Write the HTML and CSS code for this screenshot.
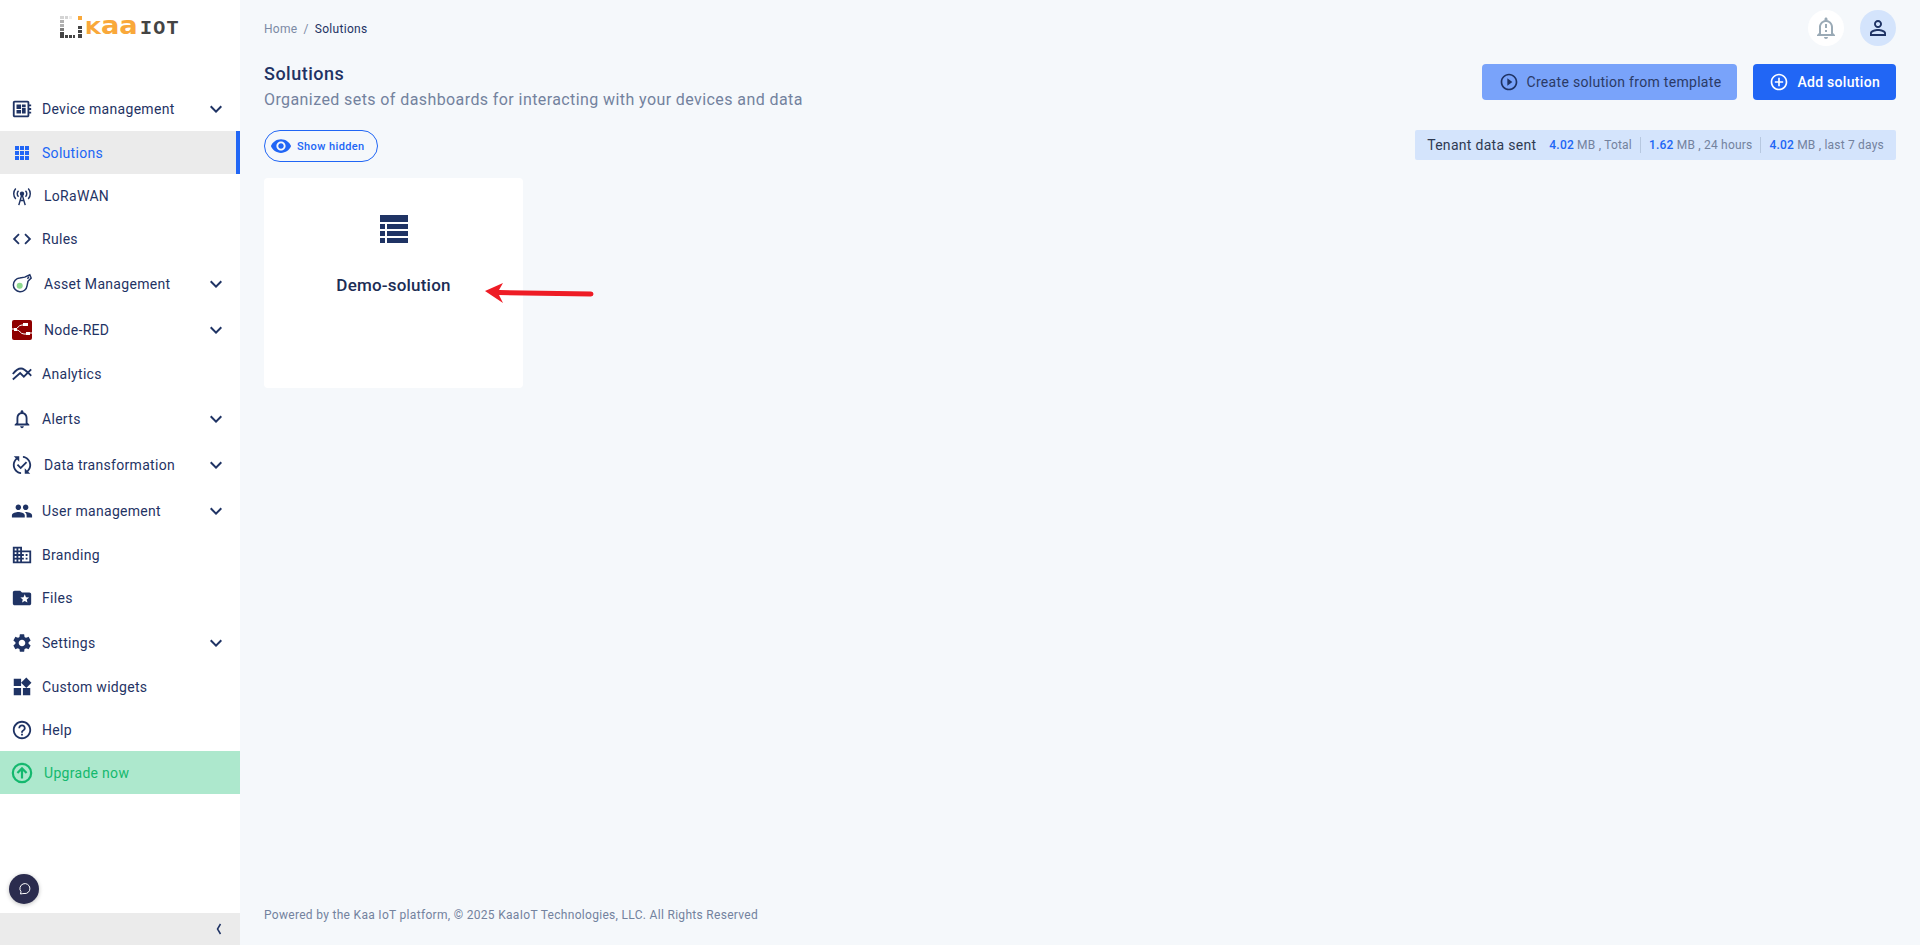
FILE: index.html
```html
<!DOCTYPE html>
<html lang="en">
<head>
    <meta charset="UTF-8">
    <meta name="viewport" content="width=device-width, initial-scale=1.0">
    <title>Solutions</title>
    <link rel="stylesheet" href="styles.css">
</head>
<body>
    <svg class="sprite" width="0" height="0">
        <symbol id="chevron" viewBox="0 0 24 24"><path d="M16.59 8.59L12 13.17 7.41 8.59 6 10l6 6 6-6z"/></symbol>
    </svg>

    <aside class="sidebar">
        <div class="logo">
            <svg class="logo-dots" width="22" height="22" viewBox="0 0 22 22">
                <path fill="#d4d4d4" d="M0 0h4v3H0zM5 0h3v3H5z"/>
                <path fill="#ededed" d="M9 0h3v3H9z"/>
                <path fill="#b0b0b0" d="M0 4h4v3H0zM0 8h4v3H0z"/>
                <path fill="#7a7a7a" d="M0 12h4v3H0z"/>
                <path fill="#444" d="M0 16h4v6H0zM5 19h3v3H5zM9 19h3v3H9zM13 19h2v3h-2zM18 10h4v3h-4zM18 14h4v3h-4zM18 18h4v4h-4z"/>
                <path fill="#f9a83a" d="M18 0h4v4h-4z"/>
            </svg>
            <span class="logo-kaa"><span class="logo-k">K</span>aa</span>
            <span class="logo-iot">IOT</span>
        </div>

        <nav class="nav">
            <a class="nav-item nav-group nav-first">
                <svg class="nav-icon" viewBox="0 0 24 24"><path d="M22 9V7h-2V5c0-1.1-.9-2-2-2H4c-1.1 0-2 .9-2 2v14c0 1.1.9 2 2 2h14c1.1 0 2-.9 2-2v-2h2v-2h-2v-2h2v-2h-2V9h2zm-4 10H4V5h14v14zM6 13h5v4H6zm6-6h4v3h-4zM6 7h5v5H6zm6 4h4v6h-4z"/></svg>
                <span>Device management</span>
                <svg class="nav-chevron"><use href="#chevron"/></svg>
            </a>
            <a class="nav-item nav-active">
                <svg class="nav-icon nav-icon-full" viewBox="0 0 24 24"><path d="M5 5h4v4H5zM10 5h4v4h-4zM15 5h4v4h-4zM5 10h4v4H5zM10 10h4v4h-4zM15 10h4v4h-4zM5 15h4v4H5zM10 15h4v4h-4zM15 15h4v4h-4z"/></svg>
                <span>Solutions</span>
            </a>
            <a class="nav-item nav-wide nav-tall">
                <svg class="nav-icon nav-line nav-line-thin" viewBox="0 0 24 24"><circle cx="12" cy="9.500" r="1.600" fill="currentColor"/><path d="M12 10l-3.500 12M12 10l3.500 12M9.800 17h4.400M8.200 6.200a4.600 4.600 0 0 0 0 6.600M15.800 6.200a4.600 4.600 0 0 1 0 6.600M5.200 3.800a8.400 8.400 0 0 0 0 11.400M18.800 3.800a8.400 8.400 0 0 1 0 11.400"/></svg>
                <span>LoRaWAN</span>
            </a>
            <a class="nav-item nav-up">
                <svg class="nav-icon" viewBox="0 0 24 24"><path d="M9.400 16.600L4.800 12l4.600-4.600L8 6l-6 6 6 6 1.400-1.400zm5.200 0l4.600-4.600-4.600-4.600L16 6l6 6-6 6-1.400-1.400z"/></svg>
                <span>Rules</span>
            </a>
            <a class="nav-item nav-wide nav-group">
                <svg class="nav-icon nav-line nav-line-thin" viewBox="0 0 24 24"><path d="M15 4.500l5.500-2.500 1.500 3.500-3.500 3.500-1 5a7.500 7.500 0 1 1-8-8.500zM19.500 4l-1.500 2.500"/><circle cx="9.500" cy="14" r="2.500" fill="#8fd98f" stroke="#8fd98f"/></svg>
                <span>Asset Management</span>
                <svg class="nav-chevron"><use href="#chevron"/></svg>
            </a>
            <a class="nav-item nav-wide nav-group">
                <svg class="nav-icon nav-icon-red" viewBox="0 0 20 20"><rect width="20" height="20" rx="2" fill="#8f0000"/><path fill="none" stroke="#fff" d="M0 9h3c3 0 3-4 7-4h3M5 10c3 0 3 4 7 4h3M16 13h4M3 9l2 1"/><path fill="#fff" d="M11 3h5v3h-5zM14 12h4v3h-4zM2 8h3v3H2z"/></svg>
                <span>Node-RED</span>
                <svg class="nav-chevron"><use href="#chevron"/></svg>
            </a>
            <a class="nav-item nav-up">
                <svg class="nav-icon nav-line" viewBox="0 0 24 24"><path d="M2 12c3-4 6-6 9-6 4 0 7 4 11 8M2 18l8-7 4 4 8-8"/></svg>
                <span>Analytics</span>
            </a>
            <a class="nav-item nav-group">
                <svg class="nav-icon" viewBox="0 0 24 24"><path d="M12 22c1.100 0 2-.9 2-2h-4c0 1.100.9 2 2 2zm6-6v-5c0-3.070-1.630-5.640-4.500-6.320V4c0-.83-.67-1.500-1.500-1.500s-1.500.67-1.500 1.500v.68C7.640 5.360 6 7.920 6 11v5l-2 2v1h16v-1l-2-2zm-2 1H8v-6c0-2.480 1.510-4.500 4-4.500s4 2.020 4 4.500v6z"/></svg>
                <span>Alerts</span>
                <svg class="nav-chevron"><use href="#chevron"/></svg>
            </a>
            <a class="nav-item nav-wide nav-group">
                <svg class="nav-icon" viewBox="0 0 24 24"><path d="M17.660 9.530l-7.070 7.070-4.240-4.240 1.410-1.410 2.830 2.830 5.660-5.660 1.410 1.410zM4 12c0-2.330 1.020-4.420 2.620-5.880L9 8.500v-6H3l2.200 2.200C3.240 6.520 2 9.110 2 12c0 5.190 3.950 9.450 9 9.950v-2.020c-3.940-.49-7-3.860-7-7.930zm18 0c0-5.190-3.950-9.450-9-9.950v2.020c3.940.49 7 3.860 7 7.930 0 2.330-1.020 4.420-2.620 5.880L15 15.500v6h6l-2.200-2.200c1.960-1.820 3.200-4.410 3.200-7.300z"/></svg>
                <span>Data transformation</span>
                <svg class="nav-chevron"><use href="#chevron"/></svg>
            </a>
            <a class="nav-item nav-group">
                <svg class="nav-icon" viewBox="0 0 24 24"><path d="M16 11c1.660 0 2.990-1.340 2.990-3S17.660 5 16 5c-1.660 0-3 1.340-3 3s1.340 3 3 3zm-8 0c1.660 0 2.990-1.340 2.990-3S9.660 5 8 5C6.340 5 5 6.340 5 8s1.340 3 3 3zm0 2c-2.330 0-7 1.170-7 3.500V19h14v-2.500c0-2.330-4.670-3.500-7-3.500zm8 0c-.29 0-.62.02-.97.05 1.160.84 1.970 1.970 1.970 3.450V19h6v-2.500c0-2.330-4.670-3.500-7-3.500z"/></svg>
                <span>User management</span>
                <svg class="nav-chevron"><use href="#chevron"/></svg>
            </a>
            <a class="nav-item nav-up">
                <svg class="nav-icon" viewBox="0 0 24 24"><path d="M12 7V3H2v18h20V7H12zM6 19H4v-2h2v2zm0-4H4v-2h2v2zm0-4H4V9h2v2zm0-4H4V5h2v2zm4 12H8v-2h2v2zm0-4H8v-2h2v2zm0-4H8V9h2v2zm0-4H8V5h2v2zm10 12h-8v-2h2v-2h-2v-2h2v-2h-2V9h8v10zm-2-8h-2v2h2v-2zm0 4h-2v2h2v-2z"/></svg>
                <span>Branding</span>
            </a>
            <a class="nav-item nav-up">
                <svg class="nav-icon" viewBox="0 0 24 24"><path d="M20 6h-8l-2-2H4c-1.100 0-1.990.9-1.990 2L2 18c0 1.100.9 2 2 2h16c1.100 0 2-.9 2-2V8c0-1.100-.9-2-2-2zm-2.060 11L15 15.280 12.060 17l.78-3.330-2.590-2.240 3.410-.29L15 8l1.340 3.140 3.410.29-2.590 2.240.78 3.330z"/></svg>
                <span>Files</span>
            </a>
            <a class="nav-item nav-group">
                <svg class="nav-icon" viewBox="0 0 24 24"><path d="M19.140 12.940c.04-.3.06-.61.06-.94 0-.32-.02-.64-.07-.94l2.030-1.580c.18-.14.23-.41.12-.61l-1.920-3.320c-.12-.22-.37-.29-.59-.22l-2.390.96c-.5-.38-1.030-.7-1.620-.94l-.36-2.540c-.04-.24-.24-.41-.48-.41h-3.840c-.24 0-.43.17-.47.41l-.36 2.540c-.59.24-1.130.57-1.620.94l-2.390-.96c-.22-.08-.47 0-.59.22L2.740 8.870c-.12.21-.08.47.12.61l2.030 1.580c-.05.3-.09.63-.09.94s.02.64.07.94l-2.030 1.580c-.18.14-.23.41-.12.61l1.920 3.320c.12.22.37.29.59.22l2.390-.96c.5.38 1.030.7 1.620.94l.36 2.540c.05.24.24.41.48.41h3.840c.24 0 .44-.17.47-.41l.36-2.540c.59-.24 1.130-.56 1.620-.94l2.390.96c.22.08.47 0 .59-.22l1.920-3.320c.12-.22.07-.47-.12-.61l-2.010-1.580zM12 15.600c-1.980 0-3.600-1.620-3.600-3.600s1.620-3.600 3.600-3.600 3.600 1.620 3.600 3.600-1.620 3.600-3.600 3.600z"/></svg>
                <span>Settings</span>
                <svg class="nav-chevron"><use href="#chevron"/></svg>
            </a>
            <a class="nav-item nav-up">
                <svg class="nav-icon" viewBox="0 0 24 24"><path d="M13 13v8h8v-8h-8zM3 21h8v-8H3v8zM3 3v8h8V3H3zm13.660-1.310L11 7.340 16.660 13l5.660-5.660-5.660-5.650z"/></svg>
                <span>Custom widgets</span>
            </a>
            <a class="nav-item nav-short">
                <svg class="nav-icon" viewBox="0 0 24 24"><path d="M11 18h2v-2h-2v2zm1-16C6.480 2 2 6.480 2 12s4.480 10 10 10 10-4.480 10-10S17.520 2 12 2zm0 18c-4.410 0-8-3.590-8-8s3.590-8 8-8 8 3.590 8 8-3.590 8-8 8zm0-14c-2.210 0-4 1.790-4 4h2c0-1.100.9-2 2-2s2 .9 2 2c0 2-3 1.750-3 5h2c0-2.250 3-2.500 3-5 0-2.210-1.790-4-4-4z"/></svg>
                <span>Help</span>
            </a>
            <a class="nav-item nav-wide nav-upgrade">
                <svg class="nav-icon nav-line" viewBox="0 0 24 24"><circle cx="12" cy="12" r="10"/><path d="M12 18V7M7 12l5-5 5 5"/></svg>
                <span>Upgrade now</span>
            </a>
        </nav>

        <button class="chat-btn">
            <svg width="16" height="16" viewBox="0 0 16 16" fill="none" stroke="#fff"><path d="M4.500 13l.5-2.300A5 5 0 1 1 8 12.500c-1.300 0-2.300.3-3.500.5z"/></svg>
        </button>
        <div class="collapse-bar">
            <svg width="8" height="12" viewBox="0 0 8 12" fill="none" stroke="#1f3364" stroke-width="1.500"><path d="M5.500 1L2.500 6l3 5"/></svg>
        </div>
    </aside>

    <main class="main">
        <div class="topbar">
            <div class="breadcrumb">
                <span class="crumb-muted">Home</span>
                <span class="crumb-muted">/</span>
                <span>Solutions</span>
            </div>
            <div class="topbar-actions">
                <div class="round-btn">
                    <svg width="24" height="24" viewBox="0 0 24 24" fill="#9aaab6"><path d="M10.010 21.010c0 1.100.89 1.990 1.990 1.990s1.990-.89 1.990-1.990h-3.980zM12 6c2.760 0 5 2.240 5 5v7H7v-7c0-2.760 2.240-5 5-5zm0-4.500c-.83 0-1.500.67-1.500 1.500v1.170C7.360 4.850 5 7.650 5 11v6l-2 2v1h18v-1l-2-2v-6c0-3.350-2.360-6.150-5.500-6.830V3c0-.83-.67-1.500-1.500-1.500zM11 8h2v4h-2zm0 6h2v2h-2z"/></svg>
                </div>
                <div class="round-btn round-btn-user">
                    <svg width="24" height="24" viewBox="0 0 24 24" fill="#1f3364"><path d="M12 5.900c1.160 0 2.100.94 2.100 2.100s-.94 2.100-2.100 2.100S9.900 9.160 9.900 8s.94-2.100 2.100-2.100m0 9c2.970 0 6.100 1.460 6.100 2.100v1.100H5.900V17c0-.64 3.130-2.100 6.100-2.100M12 4C9.790 4 8 5.790 8 8s1.790 4 4 4 4-1.790 4-4-1.790-4-4-4zm0 9c-2.670 0-8 1.340-8 4v3h16v-3c0-2.660-5.330-4-8-4z"/></svg>
                </div>
            </div>
        </div>

        <div class="page-head">
            <div>
                <h1 class="page-title">Solutions</h1>
                <p class="page-sub">Organized sets of dashboards for interacting with your devices and data</p>
            </div>
            <div class="page-actions">
                <button class="btn btn-light">
                    <svg width="20" height="20" viewBox="0 0 24 24" fill="#1f3364"><path d="M10 16.500l6-4.500-6-4.500v9zM12 2C6.480 2 2 6.480 2 12s4.480 10 10 10 10-4.480 10-10S17.520 2 12 2zm0 18c-4.410 0-8-3.590-8-8s3.590-8 8-8 8 3.590 8 8-3.590 8-8 8z"/></svg>
                    Create solution from template
                </button>
                <button class="btn btn-primary">
                    <svg width="20" height="20" viewBox="0 0 24 24" fill="#fff"><path d="M13 7h-2v4H7v2h4v4h2v-4h4v-2h-4V7zm-1-5C6.480 2 2 6.480 2 12s4.480 10 10 10 10-4.480 10-10S17.520 2 12 2zm0 18c-4.410 0-8-3.590-8-8s3.590-8 8-8 8 3.590 8 8-3.590 8-8 8z"/></svg>
                    Add solution
                </button>
            </div>
        </div>

        <div class="filter-row">
            <button class="pill">
                <svg width="22" height="22" viewBox="0 0 24 24" fill="#2166f5"><path d="M12 4.500C7 4.500 2.730 7.610 1 12c1.730 4.390 6 7.500 11 7.500s9.270-3.110 11-7.500c-1.730-4.390-6-7.500-11-7.500zM12 17c-2.760 0-5-2.240-5-5s2.240-5 5-5 5 2.240 5 5-2.240 5-5 5zm0-8c-1.660 0-3 1.340-3 3s1.340 3 3 3 3-1.340 3-3-1.340-3-3-3z"/></svg>
                Show hidden
            </button>
            <div class="usage">
                <span class="usage-title">Tenant data sent</span>
                <span class="usage-cell"><b>4.02</b> MB , Total</span>
                <span class="usage-cell"><b>1.62</b> MB , 24 hours</span>
                <span class="usage-cell"><b>4.02</b> MB , last 7 days</span>
            </div>
        </div>

        <div class="cards">
            <div class="card">
                <svg width="28" height="28" viewBox="0 0 28 28" fill="#1f3364"><path d="M0 0h28v7H0zM0 9h5v5H0zM7 9h21v5H7zM0 16h5v5H0zM7 16h21v5H7zM0 23h5v5H0zM7 23h21v5H7z"/></svg>
                <div class="card-name">Demo-solution</div>
            </div>
        </div>

        <footer class="footer">Powered by the Kaa IoT platform, © 2025 KaaIoT Technologies, LLC. All Rights Reserved</footer>
    </main>

    <!-- annotation on top of the screenshot -->
    <svg class="arrow" width="110" height="20" viewBox="0 0 110 20">
        <path fill="#ee1c25" d="M0 6l18-8-4 7 92 1.500a2.500 2.500 0 0 1 0 5L14 10l4 8z" transform="translate(0 2)"/>
    </svg>
</body>
</html>
```

FILE: styles.css
```css
* {
    box-sizing: border-box;
}

body {
    display: flex;
    height: 100vh;
    margin: 0;
    overflow: hidden;
    background-color: #f5f8fb;
    color: #1f3364;
    font-family: Roboto, "Liberation Sans", sans-serif;
}

.sprite {
    position: absolute;
}

/* sidebar */
.sidebar {
    display: flex;
    flex-direction: column;
    flex: none;
    width: 240px;
    background-color: #fff;
}

.logo {
    display: flex;
    align-items: flex-end;
    height: 86px;
    padding: 16px 0 0 60px;
}

.logo-dots {
    margin-right: 3px;
    margin-bottom: 48px;
}

.logo-kaa {
    display: inline-block;
    width: 55px;
    margin-bottom: 44px;
    color: #f9a83a;
    font-family: "DejaVu Sans", sans-serif;
    font-size: 24px;
    font-weight: 700;
    line-height: 28px;
    white-space: nowrap;
    transform: scaleX(1.14);
    transform-origin: left;
}

.logo-k {
    font-size: 18px;
}

.logo-iot {
    margin-bottom: 44px;
    color: #444;
    font-family: "Liberation Mono", monospace;
    font-size: 20px;
    font-weight: 700;
    line-height: 27px;
    letter-spacing: 1.300px;
}

.nav {
    display: flex;
    flex-direction: column;
}

.nav-item {
    display: flex;
    align-items: center;
    gap: 8px;
    height: 43px;
    padding: 0 10px;
    font-size: 14px;
    letter-spacing: 0.3px;
}

.nav-group {
    height: 46px;
}

.nav-first {
    height: 45px;
}

.nav-tall {
    height: 44px;
}

.nav-short {
    height: 42px;
}

.nav-up {
    padding-bottom: 2px;
}

.nav-wide {
    gap: 10px;
}

.nav-icon {
    flex: none;
    width: 22px;
    height: 22px;
    margin: 0 1px;
    fill: currentColor;
}

.nav-icon-full {
    width: 24px;
    height: 24px;
    margin: 0;
}

.nav-icon-red {
    width: 20px;
    height: 20px;
    margin: 0 2px;
}

.nav-line {
    fill: none;
    stroke: currentColor;
    stroke-width: 2;
}

.nav-line-thin {
    stroke-width: 1.600;
}

.nav-chevron {
    width: 24px;
    height: 24px;
    margin-left: auto;
    margin-right: 2px;
    fill: currentColor;
}

.nav-active {
    background-color: #ebebeb;
    border-right: 4px solid #2166f5;
    color: #2166f5;
}

.nav-upgrade {
    background-color: #ade8cd;
    color: #14b86e;
}

.nav-upgrade .nav-line {
    stroke-width: 2.400;
}

.chat-btn {
    display: flex;
    align-items: center;
    justify-content: center;
    width: 30px;
    height: 30px;
    margin: auto 0 9px 9px;
    padding: 0;
    border: none;
    border-radius: 50%;
    background-color: #2b2c4e;
    box-shadow: 0 1px 4px rgba(0, 0, 0, 0.25);
}

.collapse-bar {
    display: flex;
    align-items: center;
    justify-content: flex-end;
    height: 32px;
    padding-right: 17px;
    background-color: #ebebeb;
}

/* main */
.main {
    display: flex;
    flex-direction: column;
    flex: 1;
    padding: 10px 24px 23px;
}

.topbar {
    display: flex;
    align-items: center;
    justify-content: space-between;
    height: 36px;
}

.breadcrumb {
    display: flex;
    gap: 6px;
    padding-top: 2px;
    font-size: 12px;
    letter-spacing: 0.3px;
}

.crumb-muted {
    color: #7c8aa5;
}

.topbar-actions {
    display: flex;
    gap: 16px;
}

.round-btn {
    display: flex;
    align-items: center;
    justify-content: center;
    width: 36px;
    height: 36px;
    border-radius: 50%;
    background-color: #fff;
}

.round-btn-user {
    background-color: #d4e4fc;
}

.page-head {
    display: flex;
    justify-content: space-between;
    height: 84px;
    padding-top: 18px;
}

.page-title {
    margin: -1px 0 0;
    font-size: 18px;
    font-weight: 500;
    line-height: 21px;
    letter-spacing: 0.5px;
}

.page-sub {
    margin: 5px 0 0;
    color: #73829e;
    font-size: 16px;
    line-height: 22px;
    letter-spacing: 0.41px;
}

.page-actions {
    display: flex;
    gap: 16px;
}

.btn {
    display: flex;
    align-items: center;
    gap: 8px;
    height: 36px;
    padding: 0 16px;
    border: none;
    border-radius: 4px;
    font-family: inherit;
    font-size: 14px;
    font-weight: 500;
    letter-spacing: 0.3px;
}

.btn-light {
    padding-left: 17px;
    background-color: #79a3fa;
    color: #2b3a66;
    font-weight: 400;
}

.btn-primary {
    background-color: #2166f5;
    color: #fff;
}

.filter-row {
    display: flex;
    align-items: flex-start;
    justify-content: space-between;
    height: 48px;
}

.pill {
    display: flex;
    align-items: center;
    gap: 5px;
    height: 32px;
    padding: 0 12px 0 5px;
    border: 1px solid #2166f5;
    border-radius: 16px;
    background: none;
    color: #2166f5;
    font-family: inherit;
    font-size: 11px;
    font-weight: 500;
    letter-spacing: 0.4px;
}

.usage {
    display: flex;
    align-items: center;
    height: 30px;
    padding: 0 12px;
    border-radius: 2px;
    background-color: #d4e4fc;
    color: #73829e;
    font-size: 12px;
    letter-spacing: 0.2px;
}

.usage-title {
    margin-right: 13px;
    color: #2f3a52;
    font-size: 14px;
    letter-spacing: 0.3px;
}

.usage-cell {
    padding: 0 8px;
    border-left: 1px solid #b7c8e0;
    line-height: 16px;
}

.usage-title + .usage-cell {
    padding-left: 0;
    border-left: none;
}

.usage-cell:last-child {
    padding-right: 0;
}

.usage-cell b {
    color: #2166f5;
    font-weight: 500;
}

.cards {
    display: flex;
}

.card {
    display: flex;
    flex-direction: column;
    align-items: center;
    width: 259px;
    height: 210px;
    padding-top: 37px;
    border-radius: 4px;
    background-color: #fff;
}

.card-name {
    margin-top: 32px;
    color: #1c2d55;
    font-size: 17px;
    font-weight: 500;
    line-height: 20px;
    letter-spacing: 0.2px;
}

.footer {
    margin-top: auto;
    color: #73829e;
    font-size: 12px;
    line-height: 14px;
    letter-spacing: 0.305px;
}

/* arrow lies over the card */
.arrow {
    position: absolute;
    left: 485px;
    top: 283px;
    overflow: visible;
}
```
